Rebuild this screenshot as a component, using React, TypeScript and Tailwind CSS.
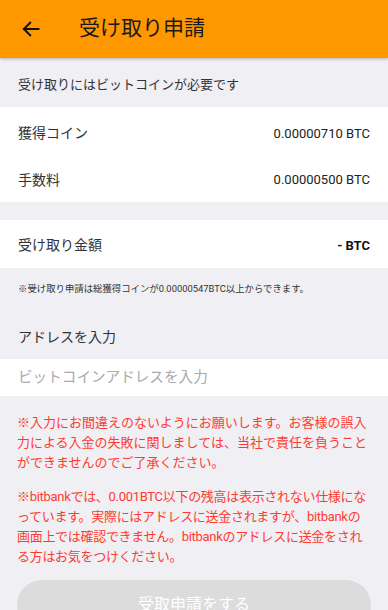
import React from "react";

export default function App() {
  const font = { fontFamily: "Roboto, 'Noto Sans CJK JP', sans-serif" };
  return (
    <div className="w-[388px] h-[610px] overflow-hidden bg-[#efeff4] text-[#222]" style={font}>
      <div className="h-[58px] bg-[#ff9800] flex items-center shadow-[0_1px_3px_rgba(0,0,0,0.25)] relative z-10">
        <svg className="ml-[21px]" width="20" height="20" viewBox="0 0 24 24" fill="none" stroke="#111" strokeWidth="2.4" strokeLinecap="square">
          <path d="M21 12H4" />
          <path d="M11 4.5L3.5 12L11 19.5" />
        </svg>
        <div className="ml-[38px] text-[21px] text-[#1a1a1a]">受け取り申請</div>
      </div>

      <div className="h-[49px] pt-[4px] flex items-center px-[18px] text-[13px] text-[#333]">受け取りにはビットコインが必要です</div>

      <div className="bg-white pt-[2px]">
        <div className="h-[49px] flex items-center justify-between px-[18px] text-[14px] text-[#333]">
          <span>獲得コイン</span>
          <span className="text-[13px] text-[#222]">0.00000710 BTC</span>
        </div>
        <div className="h-[44px] flex items-center justify-between px-[18px] text-[14px] text-[#333]">
          <span>手数料</span>
          <span className="text-[13px] text-[#222]">0.00000500 BTC</span>
        </div>
      </div>

      <div className="h-[18px]" />

      <div className="bg-white h-[48px] pt-[3px] flex items-center justify-between px-[18px] text-[14px] text-[#333]">
        <span>受け取り金額</span>
        <span className="text-[13px] font-bold text-[#111]">- BTC</span>
      </div>

      <div className="h-[42px] flex items-center px-[18px] text-[9.4px] text-[#333]">※受け取り申請は総獲得コインが0.00000547BTC以上からできます。</div>

      <div className="h-[49px] pt-[6px] flex items-center px-[18px] text-[14px] text-[#333]">アドレスを入力</div>

      <div className="bg-white h-[37px] flex items-center px-[18px] text-[14.6px] text-[#aaa]">ビットコインアドレスを入力</div>

      <div className="px-[17px] pt-[17px] text-[13px] leading-[20px] text-[#ff3b30]">
        <p>※入力にお間違えのないようにお願いします。お客様の誤入力による入金の失敗に関しましては、当社で責任を負うことができませんのでご了承ください。</p>
        <p className="mt-[14px] tracking-[-0.3px]">※bitbankでは、0.001BTC以下の残高は表示されない仕様になっています。実際にはアドレスに送金されますが、bitbankの画面上では確認できません。bitbankのアドレスに送金をされる方はお気をつけください。</p>
      </div>

      <div className="px-[17px] mt-[13px]">
        <div className="h-[50px] rounded-full bg-[#dcdcdc] flex items-center justify-center text-white text-[16px]">受取申請をする</div>
      </div>
    </div>
  );
}
